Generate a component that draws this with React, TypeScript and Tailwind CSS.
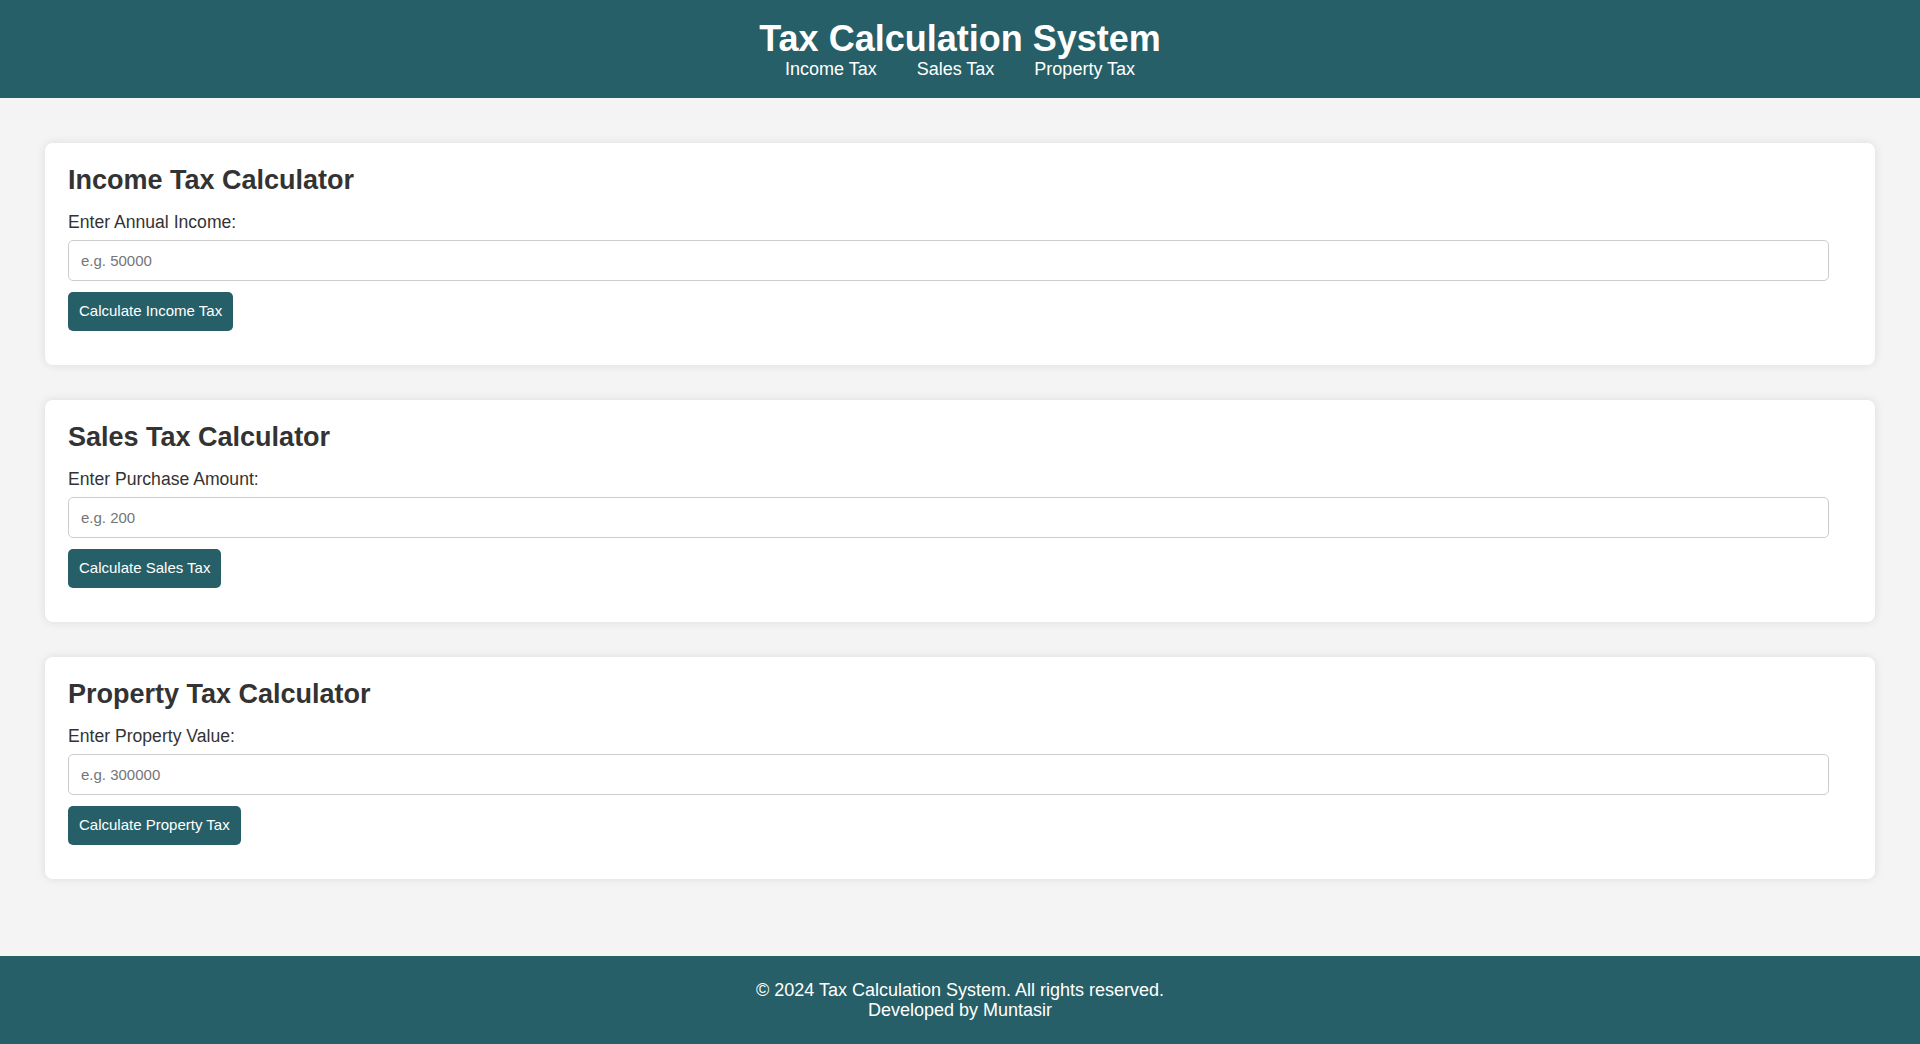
import React, { useState } from 'react';

const sections = [
  { id: 'income', title: 'Income Tax Calculator', label: 'Enter Annual Income:', placeholder: 'e.g. 50000', button: 'Calculate Income Tax' },
  { id: 'sales', title: 'Sales Tax Calculator', label: 'Enter Purchase Amount:', placeholder: 'e.g. 200', button: 'Calculate Sales Tax' },
  { id: 'property', title: 'Property Tax Calculator', label: 'Enter Property Value:', placeholder: 'e.g. 300000', button: 'Calculate Property Tax' },
];

function Calculator({ s }: { s: (typeof sections)[number] }) {
  const [value, setValue] = useState('');

  return (
    <section id={s.id} className="bg-white rounded-lg shadow-[0_0_10px_rgba(0,0,0,0.1)] pt-[22px] pb-[34px] pl-[23px] pr-[46px]">
      <h2 className="text-[27px] font-bold text-[#333] leading-[31px]">{s.title}</h2>
      <label htmlFor={s.id + '-input'} className="block mt-[16px] text-[17.6px] text-[#333] leading-[20px]">
        {s.label}
      </label>
      <input
        id={s.id + '-input'}
        type="number"
        value={value}
        onChange={(e) => setValue(e.target.value)}
        placeholder={s.placeholder}
        className="block w-full mt-[8px] h-[41px] px-3 border border-[#ccc] rounded-[5px] text-[15px] placeholder:text-[#757575] outline-none"
      />
      <button className="mt-[11px] h-[39px] px-[11px] bg-[#265f67] text-white text-[15px] rounded-[5px]">
        {s.button}
      </button>
    </section>
  );
}

export default function App() {
  return (
    <div className="min-h-screen bg-[#f4f4f4] flex flex-col" style={{ fontFamily: '"Liberation Sans", Arial, sans-serif' }}>
      {/* Header */}
      <header className="bg-[#265f67] text-white text-center pt-[18px] pb-[18px]">
        <h1 className="text-[36px] font-bold leading-[41px]">Tax Calculation System</h1>
        <nav className="flex justify-center gap-10 text-[18px] leading-[21px]">
          <a href="#income">Income Tax</a>
          <a href="#sales">Sales Tax</a>
          <a href="#property">Property Tax</a>
        </nav>
      </header>

      {/* Calculators */}
      <main className="flex-1 flex flex-col gap-[35px] px-[45px] pt-[45px] pb-[76px]">
        {sections.map((s) => (
          <Calculator key={s.id} s={s} />
        ))}
      </main>

      {/* Footer */}
      <footer className="bg-[#265f67] text-white text-center py-6 text-[18px] leading-[20px]">
        <p>&copy; 2024 Tax Calculation System. All rights reserved.</p>
        <p>Developed by Muntasir</p>
      </footer>
    </div>
  );
}
